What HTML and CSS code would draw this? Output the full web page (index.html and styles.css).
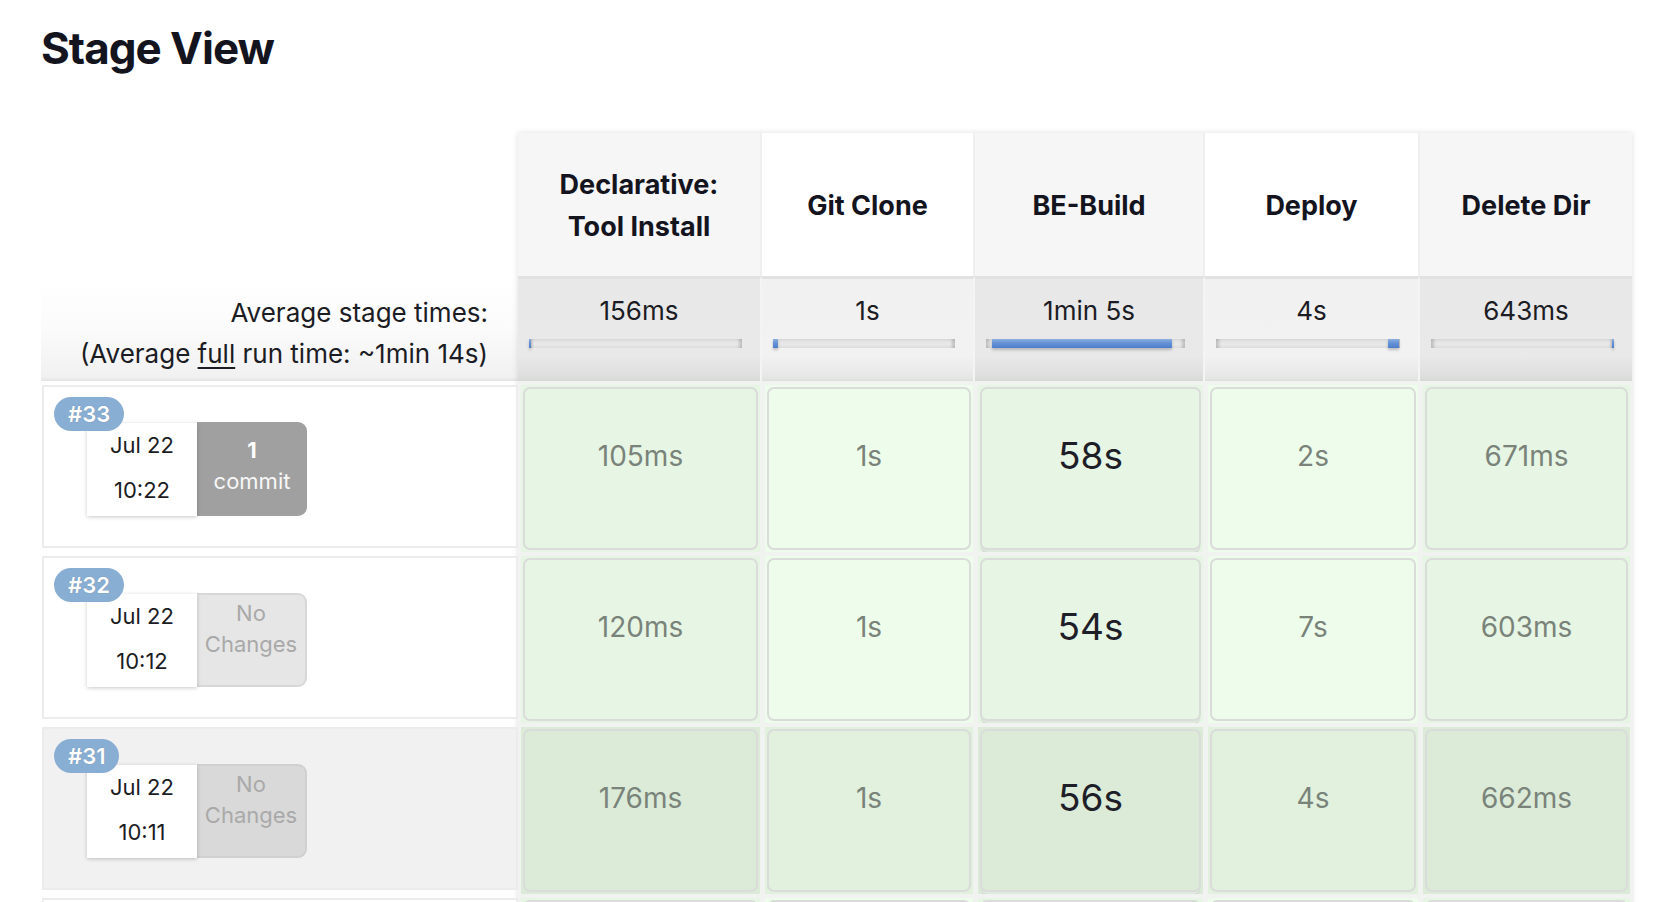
FILE: index.html
```html
<!DOCTYPE html>
<html lang="en">
<head>
<meta charset="utf-8">
<title>Stage View</title>
<link rel="stylesheet" href="styles.css">
</head>
<body>
<div class="page">
  <h2 class="title">Stage View</h2>
  <div class="table">
    <div class="builds">
      <div class="corner"></div>
      <div class="avg-label">
        <div>Average stage times:</div>
        <div>(Average <span class="u">full</span> run time: ~1min 14s)</div>
      </div>
      <div class="build-row">
        <div class="build-box">
          <span class="badge">#33</span>
          <div class="date"><div>Jul 22</div><div>10:22</div></div>
          <div class="changes has"><b>1</b><span>commit</span></div>
        </div>
      </div>
      <div class="build-row">
        <div class="build-box">
          <span class="badge">#32</span>
          <div class="date"><div>Jul 22</div><div>10:12</div></div>
          <div class="changes none"><span>No</span><span>Changes</span></div>
        </div>
      </div>
      <div class="build-row hover">
        <div class="build-box">
          <span class="badge">#31</span>
          <div class="date"><div>Jul 22</div><div>10:11</div></div>
          <div class="changes none"><span>No</span><span>Changes</span></div>
        </div>
      </div>
      <div class="build-row">
        <div class="build-box"></div>
      </div>
    </div>

    <div class="stages">
      <div class="name odd">Declarative:<br>Tool Install</div>
      <div class="name even">Git Clone</div>
      <div class="name odd">BE-Build</div>
      <div class="name even">Deploy</div>
      <div class="name odd last">Delete Dir</div>

      <div class="avg odd"><div class="avg-time">156ms</div><div class="track"><div class="fill" style="left:0%;width:1%"></div></div></div>
      <div class="avg even"><div class="avg-time">1s</div><div class="track"><div class="fill" style="left:0%;width:3%"></div></div></div>
      <div class="avg odd"><div class="avg-time">1min 5s</div><div class="track"><div class="fill" style="left:3%;width:90.5%"></div></div></div>
      <div class="avg even"><div class="avg-time">4s</div><div class="track"><div class="fill" style="left:93.5%;width:6%"></div></div></div>
      <div class="avg odd last"><div class="avg-time">643ms</div><div class="track"><div class="fill" style="left:98.9%;width:1.1%"></div></div></div>

      <div class="cell odd"><div class="box">105ms</div></div>
      <div class="cell even"><div class="box">1s</div></div>
      <div class="cell odd big"><div class="box">58s</div></div>
      <div class="cell even"><div class="box">2s</div></div>
      <div class="cell odd last"><div class="box">671ms</div></div>

      <div class="cell odd"><div class="box">120ms</div></div>
      <div class="cell even"><div class="box">1s</div></div>
      <div class="cell odd big"><div class="box">54s</div></div>
      <div class="cell even"><div class="box">7s</div></div>
      <div class="cell odd last"><div class="box">603ms</div></div>

      <div class="cell odd dark"><div class="box">176ms</div></div>
      <div class="cell even dark"><div class="box">1s</div></div>
      <div class="cell odd big dark"><div class="box">56s</div></div>
      <div class="cell even dark"><div class="box">4s</div></div>
      <div class="cell odd last dark"><div class="box">662ms</div></div>

      <div class="cell odd"><div class="box"></div></div>
      <div class="cell even"><div class="box"></div></div>
      <div class="cell odd big"><div class="box"></div></div>
      <div class="cell even"><div class="box"></div></div>
      <div class="cell odd last"><div class="box"></div></div>
    </div>
  </div>
</div>
</body>
</html>
```

FILE: styles.css
```css
html, body {
  margin: 0;
  padding: 0;
  background: #ffffff;
  overflow: hidden;
}

body {
  font-family: Inter, "Noto Sans", "DejaVu Sans", sans-serif;
  color: #14141f;
}

.page {
  padding: 0 41px;
}

.title {
  margin: 20px 0 0 0;
  font-size: 44px;
  line-height: 56px;
  font-weight: 700;
  letter-spacing: -1px;
  color: #14141f;
}

.table {
  margin-top: 57px;
  display: flex;
  align-items: flex-start;
}

/* left column */
.builds {
  width: 477px;
  flex: none;
  display: flex;
  flex-direction: column;
}

.corner {
  height: 143px;
}

.avg-label {
  height: 105px;
  box-sizing: border-box;
  padding: 16px 30px 0 0;
  text-align: right;
  font-size: 26px;
  line-height: 41px;
  color: #1c1c24;
  background: linear-gradient(#ffffff 0%, #fbfbfb 50%, #f1f1f1 96%, #e3e3e3 100%);
}

.u {
  text-decoration: underline;
  text-decoration-thickness: 2px;
  text-underline-offset: 4px;
}

.build-row {
  height: 171px;
  box-sizing: border-box;
  padding: 4px 0 4px 1px;
}

.build-box {
  position: relative;
  height: 100%;
  box-sizing: border-box;
  border: 2px solid #ececec;
  background: #ffffff;
  display: flex;
  padding: 36px 0 0 43px;
}

.build-row.hover .build-box {
  background: #f1f1f1;
  border-color: #ececec;
}

.badge {
  position: absolute;
  top: 10px;
  left: 10px;
  height: 34px;
  line-height: 34px;
  padding: 0 14px;
  border-radius: 17px;
  background: #89aed3;
  color: #ffffff;
  font-size: 22px;
  font-weight: 600;
  text-shadow: 0 0 1px rgba(0, 0, 0, 0.25);
  z-index: 2;
}

.date {
  width: 110px;
  height: 93px;
  box-sizing: border-box;
  background: #ffffff;
  box-shadow: 0 1px 4px rgba(0, 0, 0, 0.22);
  text-align: center;
  font-size: 22px;
  line-height: 45px;
  color: #1c1c24;
  position: relative;
  z-index: 1;
}

.changes {
  width: 110px;
  height: 94px;
  box-sizing: border-box;
  margin-top: -1px;
  border-radius: 0 9px 9px 0;
  display: flex;
  flex-direction: column;
  align-items: center;
  justify-content: center;
  font-size: 22px;
  line-height: 31px;
}

.changes.has {
  background: #a0a0a0;
  color: #f7f7f7;
  padding-bottom: 6px;
}

.changes.has b {
  font-weight: 700;
  color: #ffffff;
}

.changes.none {
  background: #e6e6e6;
  border: 2px solid #d8d8d8;
  border-left: none;
  color: #a9a9a9;
  padding-bottom: 22px;
}

.build-row.hover .changes.none {
  background: #d9d9d9;
  border-color: #d0d0d0;
}

/* stage columns */
.stages {
  flex: none;
  display: grid;
  grid-template-columns: 244px 213px 230px 215px 212px;
  grid-template-rows: 143px 105px repeat(4, 171px);
  box-shadow: 0 0 6px rgba(0, 0, 0, 0.13);
}

.name {
  display: flex;
  align-items: center;
  justify-content: center;
  text-align: center;
  font-size: 27px;
  line-height: 42px;
  font-weight: 700;
  color: #14141f;
  border-right: 2px solid #efefef;
  padding-top: 2px;
}

.name.odd { background: #f6f6f6; }
.name.even { background: #ffffff; }
.name.last { border-right: none; }

.avg {
  box-sizing: border-box;
  border-top: 3px solid #e1e1e1;
  border-right: 2px solid #f4f4f4;
  padding: 14px 0 0 0;
  text-align: center;
}

.avg.odd { background: linear-gradient(#e8e8e8 0%, #e9e9e9 76%, #dddddd 97%, #d6d6d6 100%); }
.avg.even { background: linear-gradient(#f1f1f1 0%, #f2f2f2 76%, #e6e6e6 97%, #dddddd 100%); }
.avg.last { border-right: none; }

.avg-time {
  font-size: 26px;
  line-height: 36px;
  color: #1c1c24;
}

.track {
  position: relative;
  height: 9px;
  margin: 10px 18px 0 11px;
  background: linear-gradient(#d6d6d6 0%, #e6e6e6 35%, #e8e8e8 65%, #dcdcdc 100%);
  box-shadow: inset 6px 0 3px -3px rgba(0, 0, 0, 0.16), inset -6px 0 3px -3px rgba(0, 0, 0, 0.16);
}

.fill {
  position: absolute;
  top: 0;
  bottom: 0;
  min-width: 2px;
  background: linear-gradient(#8cb0df 0%, #6592d6 45%, #4f7fcc 100%);
  box-shadow: 0 2px 3px rgba(0, 0, 0, 0.22);
}

.cell {
  box-sizing: border-box;
  border-left: 3px solid #f0f3f0;
  border-right: 2px solid #f0f3f0;
  border-top: 4px solid #f0f3f0;
  padding: 2px;
}

.cell.odd { background: #e7f6e4; }
.cell.even { background: #eefdeb; }
.cell.dark.odd { background: #dbebd8; }
.cell.dark.even { background: #e1f1de; }

.box {
  height: 163px;
  box-sizing: border-box;
  border: 2px solid #d9dcd9;
  border-radius: 7px;
  display: flex;
  align-items: center;
  justify-content: center;
  padding-bottom: 26px;
  font-size: 28px;
  color: #7a837a;
}

.cell.big .box {
  font-size: 37px;
  color: #1e1e28;
  box-shadow: 0 3px 0 -1px #dfe9dd, 0 4px 1px -1px #cdd0cd;
}
```
